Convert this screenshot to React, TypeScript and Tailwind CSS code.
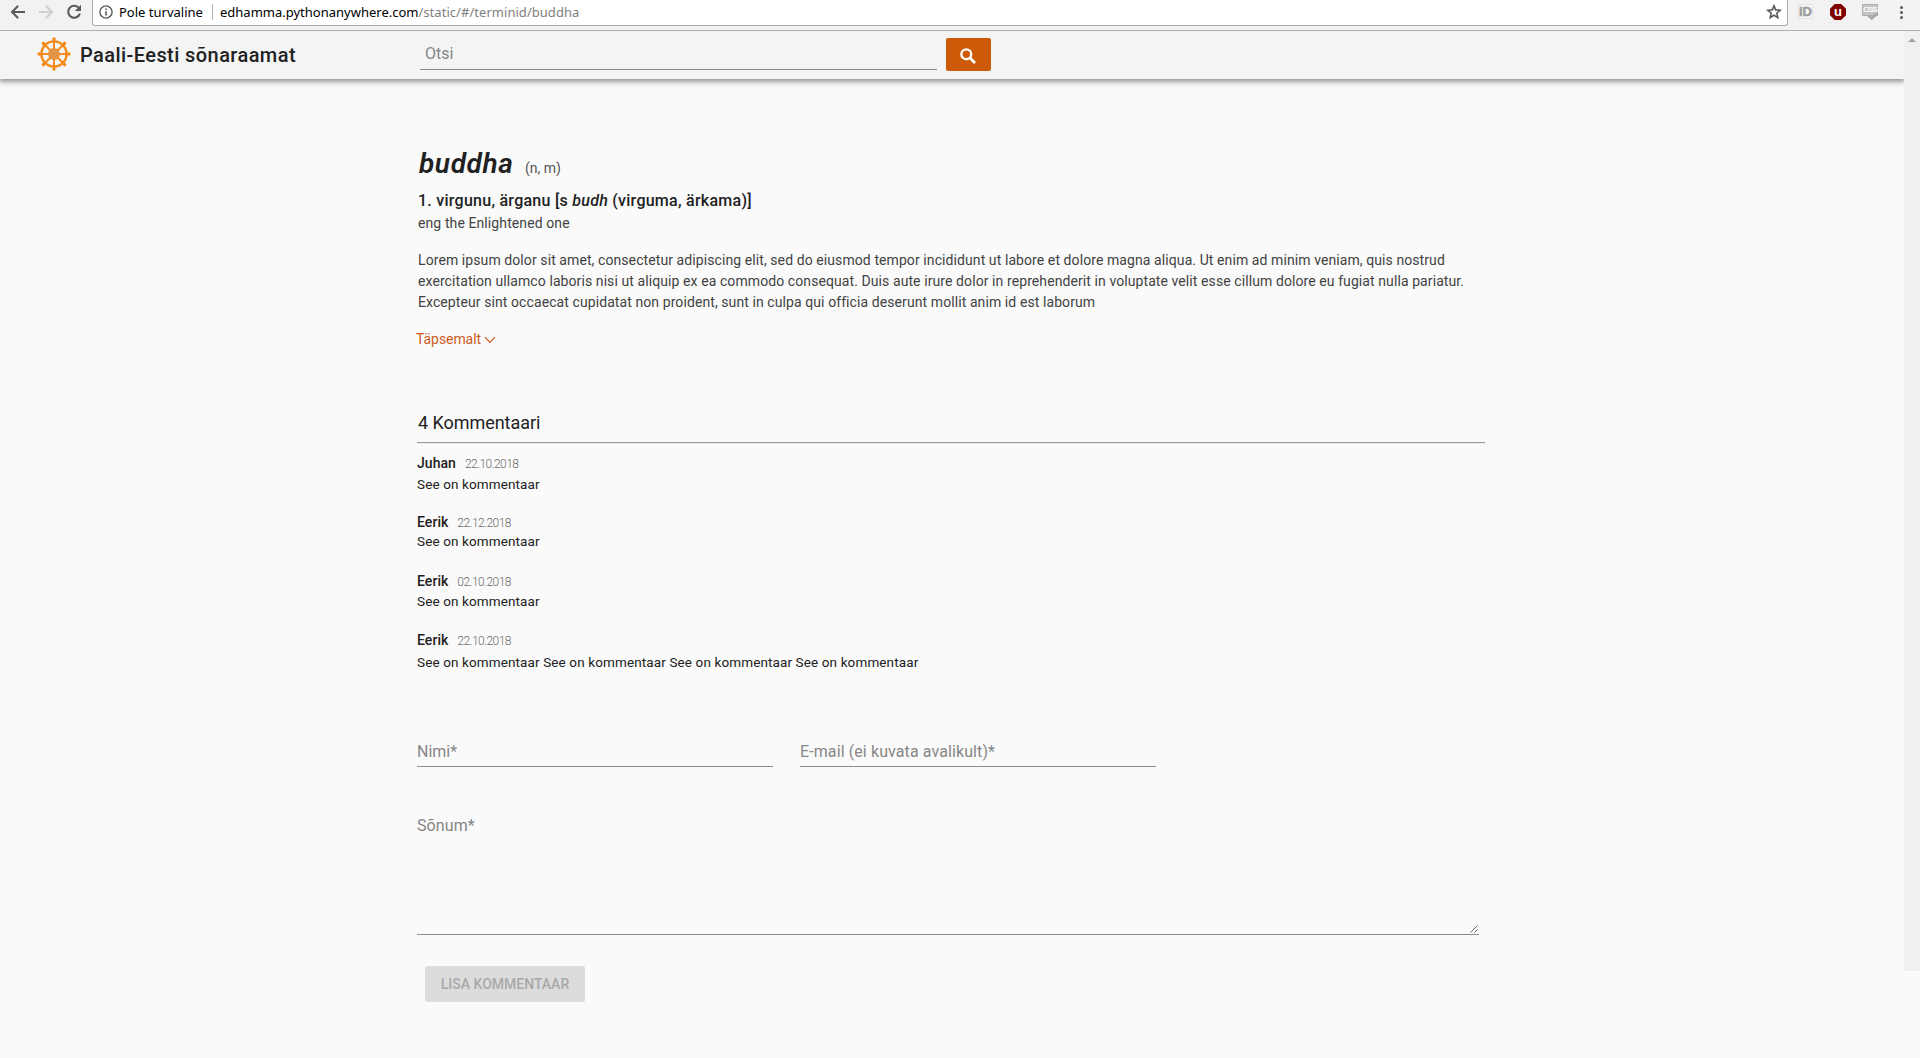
type Comment = { name: string; date: string; text: string; head: string; body: string };

const comments: Comment[] = [
  { name: "Juhan", date: "22.10.2018", text: "See on kommentaar", head: "mt-[10px]", body: "mt-[3px]" },
  { name: "Eerik", date: "22.12.2018", text: "See on kommentaar", head: "mt-[20px]", body: "mt-px" },
  { name: "Eerik", date: "02.10.2018", text: "See on kommentaar", head: "mt-[22px]", body: "mt-[2px]" },
  {
    name: "Eerik",
    date: "22.10.2018",
    text: "See on kommentaar See on kommentaar See on kommentaar See on kommentaar",
    head: "mt-[21px]",
    body: "mt-1",
  },
];

const ANGLES = [0, 45, 90, 135, 180, 225, 270, 315];

function DharmaWheel() {
  return (
    <svg width="34" height="34" viewBox="-17 -17 34 34" className="shrink-0">
      <circle r="12.6" fill="none" stroke="#f58a1a" strokeWidth="2.4" />
      {ANGLES.map((a) => (
        <g key={a} transform={`rotate(${a})`}>
          <path d="M0 -5V-15.5" stroke="#f58a1a" strokeWidth="1.9" />
          <ellipse cx="0" cy="-14.9" rx="1.7" ry="1.8" fill="#f58a1a" />
          <path d="M-2.2 -12.2L0 -10L2.2 -12.2Z" fill="#f58a1a" />
        </g>
      ))}
      <circle r="5.9" fill="#f58a1a" />
      <circle r="4.3" fill="none" stroke="#c9a888" strokeWidth="1" />
      <circle r="2.2" fill="none" stroke="#c9a888" strokeWidth="1" />
    </svg>
  );
}

function BrowserBar() {
  return (
    <div className="flex h-[31px] shrink-0 items-start border-b border-[#b0b0b0] bg-[#f2f2f2]">
      <div className="flex h-6 w-[92px] items-center pl-[9px]">
        <svg width="18" height="18" viewBox="0 0 18 18" fill="none" stroke="#5a5a5a" strokeWidth="2">
          <path d="M16 9H3.5M9.2 2.8L3 9L9.2 15.2" />
        </svg>
        <svg className="ml-[10px]" width="18" height="18" viewBox="0 0 18 18" fill="none" stroke="#d0d0d0" strokeWidth="2">
          <path d="M2 9H14.5M8.8 2.8L15 9L8.8 15.2" />
        </svg>
        <svg className="ml-[10px]" width="18" height="18" viewBox="0 0 18 18">
          <path d="M13.6 4.6A6 6 0 1 0 14.9 10.6" fill="none" stroke="#5a5a5a" strokeWidth="2.1" />
          <path d="M16 1.8V8H9.8Z" fill="#5a5a5a" />
        </svg>
      </div>
      <div className="flex h-[26px] w-[1696px] items-start rounded-b-[3px] border-x border-b border-[#a9a9a9] bg-white pl-[6px] font-['Noto_Sans',sans-serif] text-[13px] leading-6 text-black">
        <svg className="mt-[5px]" width="14" height="14" viewBox="0 0 14 14">
          <circle cx="7" cy="7" r="6.1" fill="none" stroke="#5a5a5a" strokeWidth="1.4" />
          <path d="M7 6.2V10.4M7 3.4V5" stroke="#5a5a5a" strokeWidth="1.6" />
        </svg>
        <span className="ml-[6px] w-[84px] whitespace-nowrap">Pole turvaline</span>
        <span className="ml-[9px] mt-1 h-4 w-px bg-[#b5b5b5]" />
        <span className="ml-[7px] whitespace-nowrap">
          edhamma.pythonanywhere.com<span className="tracking-[0.04px] text-[#808080]">/static/#/terminid/buddha</span>
        </span>
        <svg className="ml-auto mr-[5px] mt-[4px]" width="16" height="16" viewBox="0 0 16 16" fill="none" stroke="#5a5a5a" strokeWidth="1.6">
          <path d="M8 1.8L9.7 5.9L14.2 6.3L10.8 9.2L11.8 13.6L8 11.3L4.2 13.6L5.2 9.2L1.8 6.3L6.3 5.9Z" />
        </svg>
      </div>
      <div className="ml-[10px] mt-1 flex h-4 items-start">
        <div className="flex size-[15px] items-center justify-center border border-[#e2e2e2] bg-[#f8f8f8] font-['Liberation_Sans',sans-serif] text-[13px] font-bold leading-none text-[#9c9c9c] [-webkit-text-stroke:0.6px_#a0a0a0]">
          iD
        </div>
        <div className="ml-[17px] flex size-4 items-center justify-center bg-[#800000] pb-px font-['Liberation_Sans',sans-serif] text-[13px] font-bold leading-none text-white [clip-path:polygon(30%_0,70%_0,100%_30%,100%_70%,70%_100%,30%_100%,0_70%,0_30%)]">
          u
        </div>
        <div className="relative ml-4 h-3 w-4 border border-[#b0b0b0] bg-[#c4c4c4] text-center font-['Liberation_Sans',sans-serif] text-[8px] font-bold leading-[10px] tracking-[-0.8px] text-white">
          CSS
          <svg className="absolute left-[4px] top-[7px]" width="12" height="9" viewBox="0 0 12 9">
            <path d="M1.5 3.5L4.8 6.5L10.5 1" fill="none" stroke="#a6a6a6" strokeWidth="2.6" />
          </svg>
        </div>
        <div className="ml-[22px] mt-[2px] flex flex-col gap-[2px]">
          <span className="size-[3px] rounded-full bg-[#5a5a5a]" />
          <span className="size-[3px] rounded-full bg-[#5a5a5a]" />
          <span className="size-[3px] rounded-full bg-[#5a5a5a]" />
        </div>
      </div>
    </div>
  );
}

function SiteHeader() {
  return (
    <header className="flex h-12 items-start bg-[#f4f4f4] shadow-[0_1px_6px_1px_rgba(0,0,0,0.5)] [clip-path:inset(0_0_-12px_0)]">
      <div className="flex w-[420px] pl-[37px] pt-[6px]">
        <DharmaWheel />
        <h1 className="ml-[9px] mt-[6px] whitespace-nowrap text-xl font-medium leading-6 tracking-[0.42px]">Paali-Eesti sõnaraamat</h1>
      </div>
      <div className="mt-[10px] h-[29px] w-[517px] border-b border-[#8c8c8c] pl-[5px] pt-px leading-6 text-[#868686]">Otsi</div>
      <button className="ml-[9px] mt-[7px] flex h-[33px] w-[45px] items-center justify-center rounded-[2px] bg-[#cc5a06]">
        <svg className="mr-px mt-[2px]" width="18" height="18" viewBox="0 0 18 18" fill="none" stroke="#fff">
          <circle cx="7.3" cy="7.3" r="4.9" strokeWidth="2.4" />
          <path d="M10.8 10.8L16 16" strokeWidth="2.8" />
        </svg>
      </button>
    </header>
  );
}

function CommentForm() {
  return (
    <form className="mt-[68px]">
      <div className="flex gap-[27px] leading-6 text-[#868686]">
        <div className="h-7 w-[356px] border-b border-[#8c8c8c] pt-px">Nimi*</div>
        <div className="h-7 w-[356px] border-b border-[#8c8c8c] pt-px tracking-[0.1px]">E-mail (ei kuvata avalikult)*</div>
      </div>
      <div className="mt-[46px] flex h-[122px] w-[1062px] justify-between border-b border-[#8c8c8c] pt-px leading-6 tracking-[0.1px] text-[#868686]">
        Sõnum*
        <svg className="mb-px mr-px self-end" width="8" height="8" viewBox="0 0 8 8" stroke="#555" strokeWidth="0.9">
          <path d="M0.5 7.5L7.5 0.5M4.5 7.5L7.5 4.5" />
        </svg>
      </div>
      <button
        type="button"
        className="ml-2 mt-[31px] block h-9 w-40 rounded-[2px] bg-[#dcdcdc] text-sm font-medium leading-9 text-[#a9a9a9]"
      >
        LISA KOMMENTAAR
      </button>
    </form>
  );
}

export default function App() {
  return (
    <div className="flex h-[1058px] w-[1920px] flex-col overflow-hidden bg-[#fafafa] font-['Roboto',sans-serif] text-base text-[#212121]">
      <BrowserBar />
      <div className="flex min-h-0 flex-1">
        <div className="w-[1904px]">
          <SiteHeader />
          <main className="ml-[417px] w-[1068px] pt-[66px]">
            <section className="pl-px">
              <div className="flex h-9 items-baseline">
                <h2 className="w-[107px] pl-px pt-px text-[28px] font-semibold italic leading-9 tracking-[0.6px]">buddha</h2>
                <span className="text-sm leading-5 text-[#555]">(n, m)</span>
              </div>
              <p className="mt-2 font-medium leading-6 tracking-[0.26px]">
                1. virgunu, ärganu [s <i>budh</i> (virguma, ärkama)]
              </p>
              <p className="text-sm leading-5 tracking-[0.1px] text-[#424242]">eng the Enlightened one</p>
              <p className="mt-[17px] whitespace-nowrap text-sm leading-[21px] tracking-[0.087px] text-[#424242]">
                Lorem ipsum dolor sit amet, consectetur adipiscing elit, sed do eiusmod tempor incididunt ut labore et dolore magna aliqua. Ut enim ad minim veniam, quis nostrud
                <br />
                exercitation ullamco laboris nisi ut aliquip ex ea commodo consequat. Duis aute irure dolor in reprehenderit in voluptate velit esse cillum dolore eu fugiat nulla pariatur.
                <br />
                Excepteur sint occaecat cupidatat non proident, sunt in culpa qui officia deserunt mollit anim id est laborum
              </p>
            </section>
            <a className="-ml-px mt-4 flex items-center text-sm leading-5 tracking-[-0.06px] text-[#cc5a1e]">
              Täpsemalt
              <svg className="ml-[3px] mt-[2px]" width="12" height="8" viewBox="0 0 12 8" fill="none" stroke="#cc5a1e" strokeWidth="1.2">
                <path d="M1 1.2L6 6.4L11 1.2" />
              </svg>
            </a>
            <h3 className="mt-[62px] pl-px text-lg leading-6 tracking-[-0.05px]">4 Kommentaari</h3>
            <div className="mt-[7px] h-[2px] border-b border-t border-b-[#ececec] border-t-[#999]" />
            {comments.map((c, i) => (
              <article key={i}>
                <div className={`flex h-[18px] items-baseline gap-2 ${c.head}`}>
                  <span className="text-sm font-medium leading-[18px] tracking-[0.05px]">{c.name}</span>
                  <span className="pl-px text-xs font-light leading-[18px] tracking-[-0.55px] text-[#6b6b6b]">{c.date}</span>
                </div>
                <p className={`h-[18px] text-[13.5px] leading-[19px] tracking-[0.12px] ${c.body}`}>{c.text}</p>
              </article>
            ))}
            <CommentForm />
          </main>
        </div>
        <div className="flex h-[940px] w-4 justify-center bg-[#f0f0f0] pt-[7px]">
          <svg width="8" height="4" viewBox="0 0 8 4">
            <path d="M0 4L4 0L8 4Z" fill="#a3a3a3" />
          </svg>
        </div>
      </div>
    </div>
  );
}
